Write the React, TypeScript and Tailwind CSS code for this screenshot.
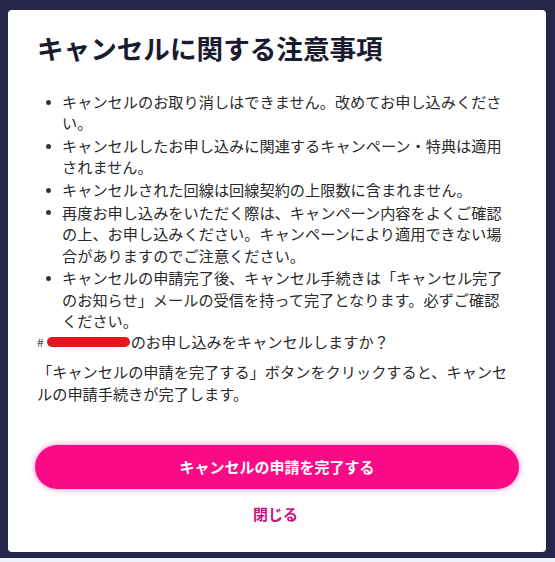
import React from "react";

const items = [
  "キャンセルのお取り消しはできません。改めてお申し込みください。",
  "キャンセルしたお申し込みに関連するキャンペーン・特典は適用されません。",
  "キャンセルされた回線は回線契約の上限数に含まれません。",
  "再度お申し込みをいただく際は、キャンペーン内容をよくご確認の上、お申し込みください。キャンペーンにより適用できない場合がありますのでご注意ください。",
  "キャンセルの申請完了後、キャンセル手続きは「キャンセル完了のお知らせ」メールの受信を持って完了となります。必ずご確認ください。",
];

export default function App() {
  return (
    <div
      className="w-[555px] h-[562px] bg-[#25264a] flex flex-col overflow-hidden"
      style={{ fontFamily: '"Noto Sans CJK JP", "Noto Sans", sans-serif' }}
    >
      <div className="pt-[10px] pl-[8px]">
        <div className="w-[538px] h-[542px] bg-white rounded-[4px] pt-[20px] pl-[29px] pr-[30px] flex flex-col">
          <h1 className="text-[26.6px] leading-[36px] font-bold text-[#1b1b2f] mb-[25px]">
            キャンセルに関する注意事項
          </h1>
          <ul className="flex flex-col gap-[1.5px] pr-[6px] text-[15.2px] leading-[21.3px] text-[#2a2a2a]">
            {items.map((t, i) => (
              <li key={i} className="flex">
                <span className="w-[25px] shrink-0 flex pt-[8.5px] pl-[9px]">
                  <span className="w-[5px] h-[5px] rounded-full bg-[#333]" />
                </span>
                <span>{t}</span>
              </li>
            ))}
          </ul>
          <div className="flex items-center text-[15.2px] leading-[21px] text-[#2a2a2a]">
            <span className="text-[12px] text-[#444]">#</span>
            <span className="w-[83px] h-[10px] mt-[1px] rounded-full bg-[#e8141c] ml-[3px] mr-[1px]" />
            <span>のお申し込みをキャンセルしますか？</span>
          </div>
          <p className="mt-[9px] text-[15.2px] leading-[21.3px] text-[#2a2a2a]">
            「キャンセルの申請を完了する」ボタンをクリックすると、キャンセルの申請手続きが完了します。
          </p>
          <button className="mt-[41px] -ml-[2px] w-[484px] h-[44px] rounded-full bg-[#fa0a86] text-white font-bold text-[15px] shadow-[0_0_6px_rgba(255,0,140,0.45)]">
            キャンセルの申請を完了する
          </button>
          <button className="mt-[14px] self-center -ml-[2px] text-[15px] leading-[21px] font-bold text-[#c9137f]">
            閉じる
          </button>
        </div>
      </div>
      <div className="h-[6px]" />
      <div className="flex-1 bg-[#eef1f8]" />
    </div>
  );
}
